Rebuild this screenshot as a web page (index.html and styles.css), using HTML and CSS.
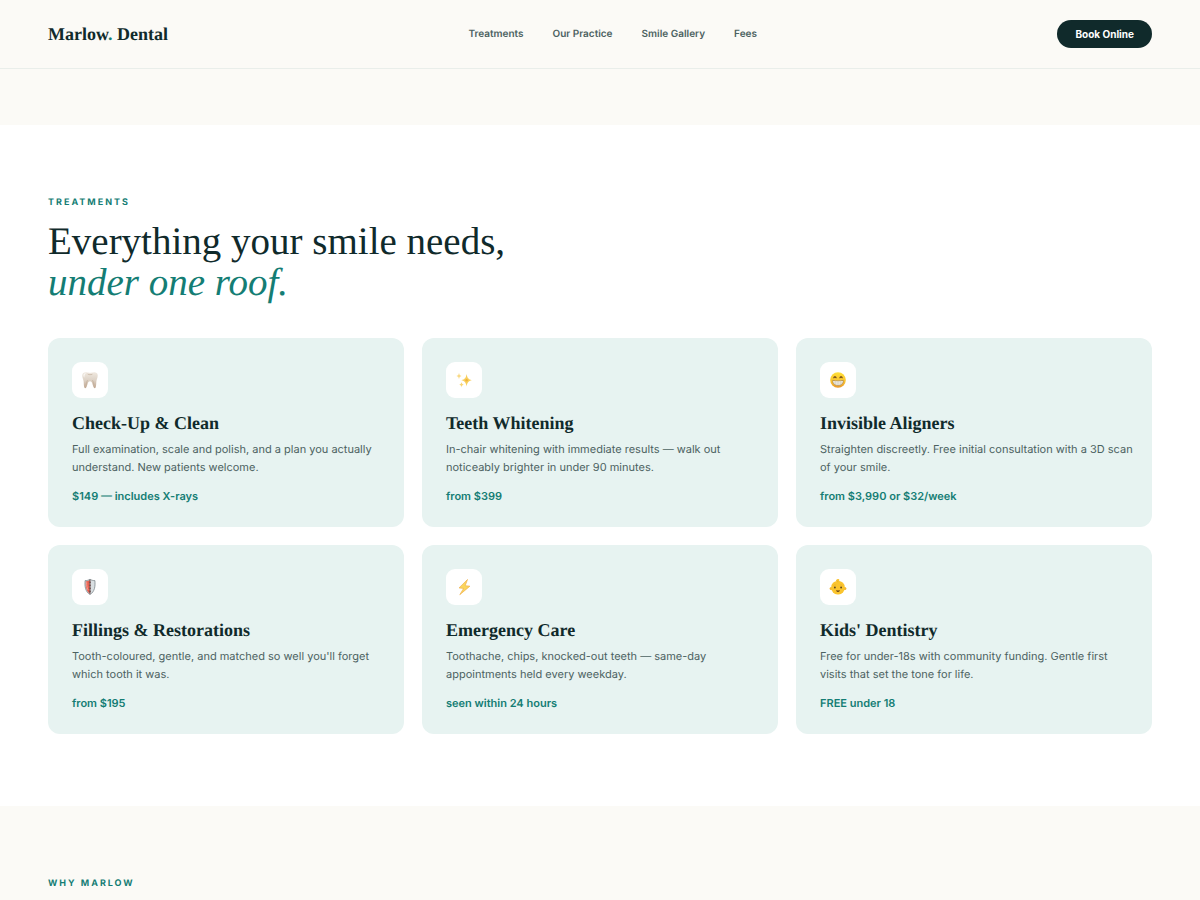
FILE: index.html
```html
<!DOCTYPE html>
<html lang="en">
<head>
  <meta charset="UTF-8">
  <title>Marlow. Dental</title>
  <meta name="viewport" content="width=device-width, initial-scale=1.0">
  <link rel="stylesheet" href="styles.css">
</head>
<body>

  <header class="site-header">
    <a class="logo" href="#">Marlow<span>.</span> Dental</a>
    <nav class="nav">
      <a href="#treatments">Treatments</a>
      <a href="#why">Our Practice</a>
      <a href="#gallery">Smile Gallery</a>
      <a href="#fees">Fees</a>
    </nav>
    <button class="book-btn" type="button">Book Online</button>
  </header>

  <main>
    <div class="spacer"></div>

    <!-- Treatments -->
    <section class="section treatments" id="treatments">
      <p class="eyebrow">Treatments</p>
      <h2>Everything your smile needs,<br><em>under one roof.</em></h2>

      <div class="cards">
        <article class="card">
          <div class="icon">
            <svg viewBox="0 0 18 18" aria-hidden="true">
              <defs>
                <linearGradient id="enamel" x1="0" y1="0" x2="0" y2="1">
                  <stop offset="0" stop-color="#f0e9e0"/>
                  <stop offset=".5" stop-color="#ddd2c6"/>
                  <stop offset="1" stop-color="#bfa58e"/>
                </linearGradient>
              </defs>
              <path fill="url(#enamel)" d="M1.300 4C1.500 1.800 3.300 1 5.300 1.200 6.800 1.300 7.600 1.800 9 1.800s2.300-.5 3.800-.6c2-.2 3.700.6 3.900 2.800.2 2.500-1 4-1.300 6.300-.3 2.300-.1 4.700-.8 6.300-.4.800-1.300.7-1.800-.1-1-1.700-1.200-4.300-2.200-5.600-.8-.9-2.400-.9-3.200 0-1 1.300-1.200 3.900-2.200 5.600-.5.800-1.400.9-1.800.1-.7-1.600-.5-4-.8-6.300C2.300 8 1.100 6.500 1.300 4z"/>
              <path fill="none" stroke="#bda893" stroke-width=".6" stroke-linecap="round" d="M7 3.300c1 .5 2.700.6 4 .1M6.300 9.500c-.7 1.200-.9 2.700-1.100 4M11.700 9.500c.7 1.200.9 2.700 1.100 4"/>
              <path fill="#fff" opacity=".7" d="M2.400 4c.2-1.400 1.600-1.900 2.700-1.700C3.800 3.100 3.300 4.700 3.500 6.500 2.800 5.900 2.300 5 2.400 4z"/>
            </svg>
          </div>
          <h3>Check-Up &amp; Clean</h3>
          <p class="desc">Full examination, scale and polish, and a plan you actually understand. New patients welcome.</p>
          <p class="price">$149 — includes X-rays</p>
        </article>

        <article class="card">
          <div class="icon">
            <svg viewBox="0 0 18 18" aria-hidden="true">
              <path fill="#f8cf5c" d="M11.600 3c.7 3.900 1.700 5.300 5.200 6.200-3.500.9-4.500 2.300-5.200 6.200-.7-3.900-1.700-5.300-5.200-6.200 3.500-.9 4.500-2.300 5.200-6.200z"/>
              <path fill="#f9da86" d="M4 1.800c.3 2.100.9 2.700 2.600 3.200C4.900 5.500 4.300 6.100 4 8.200 3.700 6.100 3.100 5.500 1.400 5 3.100 4.500 3.700 3.900 4 1.800z"/>
              <path fill="#f9d675" d="M6.500 11c.3 1.800.8 2.300 2.300 2.700-1.500.4-2 .9-2.300 2.700-.3-1.800-.8-2.300-2.300-2.700 1.500-.4 2-.9 2.300-2.700z"/>
              <circle cx="11.600" cy="9.200" r="1.200" fill="#f0b13c"/>
            </svg>
          </div>
          <h3>Teeth Whitening</h3>
          <p class="desc">In-chair whitening with immediate results — walk out noticeably brighter in under 90 minutes.</p>
          <p class="price">from $399</p>
        </article>

        <article class="card">
          <div class="icon">
            <svg viewBox="0 0 18 18" aria-hidden="true">
              <defs>
                <linearGradient id="face" x1="0" y1="0" x2="0" y2="1">
                  <stop offset="0" stop-color="#ffdf38"/>
                  <stop offset=".6" stop-color="#f9c22f"/>
                  <stop offset="1" stop-color="#e8962a"/>
                </linearGradient>
              </defs>
              <circle cx="9" cy="9" r="7.800" fill="url(#face)"/>
              <path fill="none" stroke="#68401a" stroke-width="1.100" stroke-linecap="round" d="M4.800 6.800c.4-1.300 1.900-1.300 2.300 0M10.900 6.800c.4-1.300 1.900-1.300 2.300 0"/>
              <path fill="#f2efe6" stroke="#9a7238" stroke-width=".6" d="M3.700 9.400c3.400.6 7.200.6 10.600 0 .3 3-2.200 5-5.300 5s-5.600-2-5.300-5z"/>
              <path fill="none" stroke="#c2bba9" stroke-width=".4" d="M4 11.600c3.300.6 6.700.6 10 0M6.300 9.700v4M9 9.800v4.600M11.700 9.700v4"/>
            </svg>
          </div>
          <h3>Invisible Aligners</h3>
          <p class="desc">Straighten discreetly. Free initial consultation with a 3D scan of your smile.</p>
          <p class="price">from $3,990 or $32/week</p>
        </article>

        <article class="card">
          <div class="icon">
            <svg viewBox="0 0 18 18" aria-hidden="true">
              <path fill="#d9dfe2" d="M9 1.200c1.600 1.100 3.200 1.400 4.900 1.400.5 6-.2 10.900-4.900 14-4.700-3.100-5.400-8-4.900-14 1.700 0 3.300-.3 4.900-1.400z"/>
              <path fill="#ea6050" d="M9 2v13.800C5.200 13 4.400 8.900 4.700 3.300 6.200 3.300 7.700 2.900 9 2z"/>
              <path fill="none" stroke="#7b858a" stroke-width=".8" d="M9 1.200c1.600 1.100 3.200 1.400 4.900 1.400.5 6-.2 10.900-4.900 14-4.700-3.100-5.400-8-4.900-14 1.700 0 3.300-.3 4.900-1.400z"/>
              <path fill="none" stroke="#6d5251" stroke-width="1" d="M9 1.800v14M7.900 4.300H10M7.900 7.300H10M7.900 10.300H10M7.900 13.300H10"/>
              <path fill="none" stroke="#f6b0a4" stroke-width=".8" d="M5.700 4.200c-.1 3.300.2 5.600 1.300 7.600"/>
            </svg>
          </div>
          <h3>Fillings &amp; Restorations</h3>
          <p class="desc">Tooth-coloured, gentle, and matched so well you'll forget which tooth it was.</p>
          <p class="price">from $195</p>
        </article>

        <article class="card">
          <div class="icon">
            <svg viewBox="0 0 18 18" aria-hidden="true">
              <path fill="#fbd65c" stroke="#efb04c" stroke-width=".7" stroke-linejoin="round" d="M12.500 1.500 4 9.900l4.600.5-3.800 6.300 10.100-8.500-4.700-.5z"/>
            </svg>
          </div>
          <h3>Emergency Care</h3>
          <p class="desc">Toothache, chips, knocked-out teeth — same-day appointments held every weekday.</p>
          <p class="price">seen within 24 hours</p>
        </article>

        <article class="card">
          <div class="icon">
            <svg viewBox="0 0 18 18" aria-hidden="true">
              <circle cx="2.100" cy="10.400" r="1.500" fill="#f3b52d"/>
              <circle cx="15.900" cy="10.400" r="1.500" fill="#f3b52d"/>
              <path fill="#fac42e" d="M7.300 3.800C6.700 2.300 7.800.9 9.300 1.100c1.200.1 1.400 1.200.6 1.500.7.200 1 .6 1.100 1.200z"/>
              <rect x="2.200" y="3" width="13.600" height="13.400" rx="6.300" fill="#fac42e"/>
              <path fill="none" stroke="#dda02c" stroke-width=".5" stroke-linecap="round" d="M9 3.700c-1.100-.1-1.500-.8-1.100-1.500M4.900 7.300c.5-.5 1.100-.6 1.700-.3M11.400 7c.6-.3 1.200-.2 1.700.3"/>
              <ellipse cx="5.900" cy="9.500" rx=".8" ry="1.100" fill="#40311f"/>
              <ellipse cx="12.100" cy="9.500" rx=".8" ry="1.100" fill="#40311f"/>
              <path fill="#573719" d="M7.100 12.300c1.200.4 2.600.4 3.800 0-.3 2.200-3.500 2.200-3.800 0z"/>
            </svg>
          </div>
          <h3>Kids' Dentistry</h3>
          <p class="desc">Free for under-18s with community funding. Gentle first visits that set the tone for life.</p>
          <p class="price">FREE under 18</p>
        </article>
      </div>
    </section>

    <!-- Why Marlow -->
    <section class="section why" id="why">
      <p class="eyebrow">Why Marlow</p>
    </section>
  </main>

</body>
</html>
```
FILE: styles.css
```css
:root {
  --cream: #fbfaf6;
  --ink: #102a2b;
  --teal: #147d74;
  --mint: #e7f3f1;
  --muted: #4c6261;
  --line: #e9eeea;
  --serif: 'Liberation Serif', serif;
  --sans: Inter, sans-serif;
}

* {
  box-sizing: border-box;
  margin: 0;
  padding: 0;
}

body {
  background: var(--cream);
  color: var(--ink);
  font-family: var(--sans);
  text-rendering: geometricPrecision;
}

/* Header */
.site-header {
  position: sticky;
  top: 0;
  display: flex;
  justify-content: space-between;
  align-items: center;
  padding: 20px 48px;
  background: var(--cream);
  border-bottom: 1px solid var(--line);
}

.logo {
  font-family: var(--serif);
  font-size: 18px;
  line-height: 20px;
  font-weight: 700;
  color: var(--ink);
  text-decoration: none;
}

.logo span {
  color: var(--teal);
}

.nav {
  display: flex;
  gap: 29px;
}

.nav a {
  font-size: 10px;
  font-weight: 600;
  color: var(--muted);
  text-decoration: none;
}

.book-btn {
  padding: 0 18px;
  border: none;
  border-radius: 14px;
  background: var(--ink);
  color: #fff;
  font-family: inherit;
  font-size: 10px;
  font-weight: 700;
  line-height: 28px;
  cursor: pointer;
}

.spacer {
  height: 56px;
}

/* Sections */
.section {
  padding: 72px 48px;
}

.treatments {
  background: #fff;
}

.why {
  padding-bottom: 12px;
}

.eyebrow {
  color: var(--teal);
  font-size: 9px;
  line-height: 12px;
  font-weight: 700;
  letter-spacing: 2px;
  text-transform: uppercase;
}

h2 {
  margin: 12px 0 35px;
  font-family: var(--serif);
  font-size: 39px;
  line-height: 41px;
  font-weight: 400;
}

h2 em {
  color: var(--teal);
}

/* Cards */
.cards {
  display: grid;
  grid-template-columns: repeat(3, 1fr);
  gap: 18px;
}

.card {
  padding: 24px 16px 24px 24px;
  border-radius: 12px;
  background: var(--mint);
}

.icon {
  display: flex;
  justify-content: center;
  align-items: center;
  width: 36px;
  height: 36px;
  margin-bottom: 14px;
  border-radius: 9px;
  background: #fff;
}

.icon svg {
  width: 18px;
  height: 18px;
}

h3 {
  margin-bottom: 6px;
  font-family: var(--serif);
  font-size: 18px;
  line-height: 22px;
  font-weight: 700;
}

.desc {
  margin-bottom: 13px;
  color: var(--muted);
  font-size: 11px;
  line-height: 18px;
}

.price {
  color: var(--teal);
  font-size: 11px;
  line-height: 14px;
  font-weight: 600;
}

@media (max-width: 800px) {
  .nav {
    display: none;
  }
  .cards {
    grid-template-columns: 1fr;
  }
}
```
